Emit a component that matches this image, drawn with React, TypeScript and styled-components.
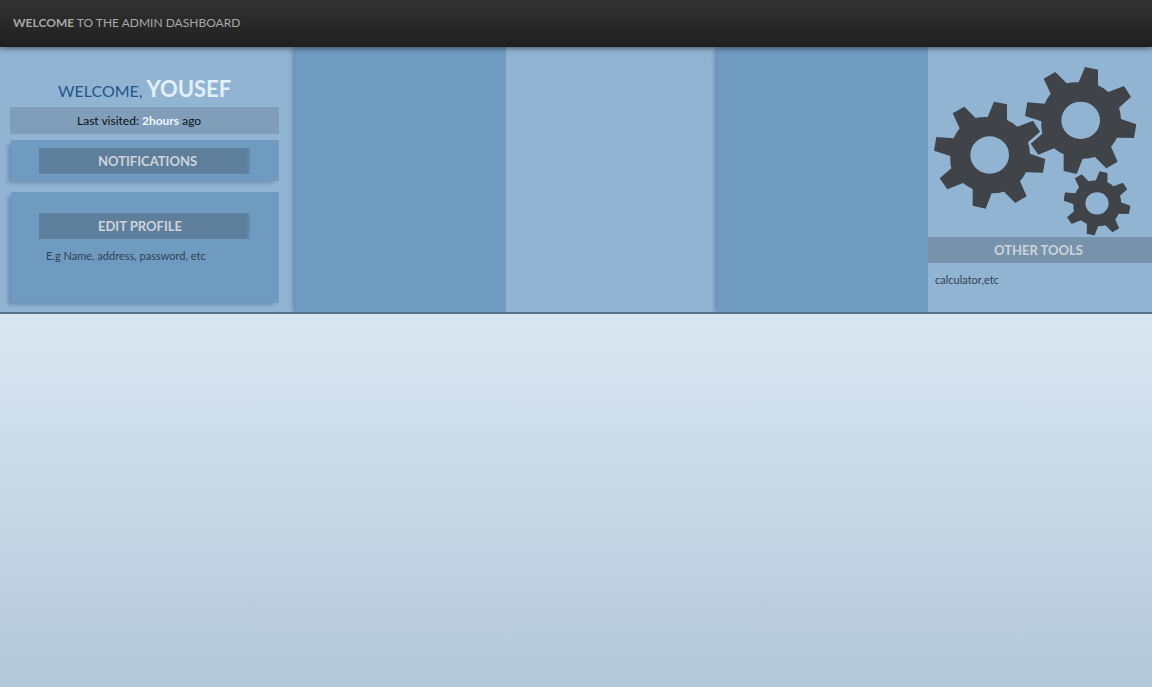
import React from "react";
import styled, { createGlobalStyle } from "styled-components";

const Global = createGlobalStyle`
  * { box-sizing: border-box; }
  body {
    margin: 0;
    min-height: 100vh;
    background: linear-gradient(#dfeaf5, #dae7f2 45%, #b4c8d9) no-repeat #b4c8d9;
    font-family: Lato, "Open Sans", sans-serif;
  }
`;

const TopBar = styled.header`
  position: relative;
  display: flex;
  align-items: center;
  height: 47px;
  padding: 0 13px 2px;
  background: linear-gradient(#323232, #1f1f1f);
  box-shadow: 0 1px 6px rgba(0, 0, 0, 0.55);
`;

const Title = styled.h1`
  margin: 0;
  font-size: 12px;
  font-weight: 400;
  line-height: 18px;
  color: #a8a8a8;
`;

const Columns = styled.main`
  display: grid;
  grid-template-columns: 295px repeat(3, 1fr) 224px;
  min-height: 267px;
  overflow: hidden;
  border-bottom: 2px solid #56718a;
`;

const Column = styled.section<{ $dark?: boolean }>`
  background: ${(p) => (p.$dark ? "#709bc0" : "#92b4d3")};
  box-shadow: ${(p) => (p.$dark ? "-1px 0 5px rgba(40, 55, 75, 0.5)" : "none")};
`;

const Profile = styled(Column)`
  display: flex;
  flex-direction: column;
  padding: 28px 16px 9px 10px;
`;

const Greeting = styled.h2`
  margin: 0;
  padding-left: 48px;
  font-size: 16px;
  font-weight: 400;
  line-height: 32px;
  color: #23558a;
`;

const UserName = styled.strong`
  font-size: 22px;
  font-weight: 700;
  line-height: 24px;
  color: #e2f0ff;
`;

const LastVisit = styled.p`
  margin: 0 0 6px;
  padding-left: 67px;
  background: #809eb9;
  font-size: 12px;
  line-height: 27px;
  color: #0b0f14;

  strong { color: #eef6ff; }
`;

const Card = styled.div<{ $tall?: boolean }>`
  margin: 0 0 ${(p) => (p.$tall ? 0 : 11)}px 1px;
  padding: ${(p) => (p.$tall ? "21px 28px 38px" : "8px 28px 7px")};
  background: #709bc0;
  box-shadow: -4px 3px 4px -1px rgba(60, 80, 110, 0.4);
`;

const CardButton = styled.button`
  display: block;
  width: 211px;
  height: 26px;
  padding: 0 0 0 59px;
  border: 0;
  background: #5e7f9c;
  box-shadow: inset -3px 0 3px -1px rgba(111, 154, 191, 0.6);
  font: 700 13px/26px Lato, "Open Sans", sans-serif;
  text-align: left;
  color: #cfd3d9;
`;

const Note = styled.p`
  margin: 8px 0 0;
  padding-left: 7px;
  font-size: 11px;
  line-height: 18px;
  color: #2f4252;
`;

const Gears = styled.svg`
  display: block;
  width: 224px;
  height: 190px;
  fill: #404449;
`;

const ToolsHeading = styled.h2`
  margin: 0;
  padding-right: 3px;
  background: #7893ad;
  text-align: center;
  font-size: 13px;
  font-weight: 700;
  line-height: 26px;
  color: #cfd3d9;
`;

const GEAR =
  "M-6-114L13-160 52-152 52-105A121 121 0 0 1 83-85L130-103 151-70 115-38A121 121 0 0 1 121-4L167 12 160 53 109 52A121 121 0 0 1 91 79L111 124 77 144 43 110A121 121 0 0 1 6 115L-12 161-51 152-51 102A121 121 0 0 1-80 84L-127 103-150 70-115 40A121 121 0 0 1-118 3L-167-13-160-54-108-50A121 121 0 0 1-90-80L-111-125-76-145-42-111A121 121 0 0 1-6-114ZM58 0A58 56 0 1 0-58 0 58 56 0 1 0 58 0Z";

export default function App() {
  return (
    <>
      <Global />
      <TopBar>
        <Title>
          <strong>WELCOME</strong> TO THE ADMIN DASHBOARD
        </Title>
      </TopBar>
      <Columns>
        <Profile>
          <Greeting>
            WELCOME, <UserName>YOUSEF</UserName>
          </Greeting>
          <LastVisit>
            Last visited: <strong>2hours</strong> ago
          </LastVisit>
          <Card>
            <CardButton type="button">NOTIFICATIONS</CardButton>
          </Card>
          <Card $tall>
            <CardButton type="button">EDIT PROFILE</CardButton>
            <Note>E.g Name, address, password, etc</Note>
          </Card>
        </Profile>
        <Column $dark />
        <Column />
        <Column $dark />
        <Column>
          <Gears viewBox="0 0 672 570" aria-hidden="true">
            <path d={GEAR} fillRule="evenodd" transform="translate(185 324)" />
            <path d={GEAR} fillRule="evenodd" transform="translate(458 220)" />
            <path d={GEAR} fillRule="evenodd" transform="translate(507 469) scale(.6)" />
          </Gears>
          <ToolsHeading>OTHER TOOLS</ToolsHeading>
          <Note>calculator,etc</Note>
        </Column>
      </Columns>
    </>
  );
}
